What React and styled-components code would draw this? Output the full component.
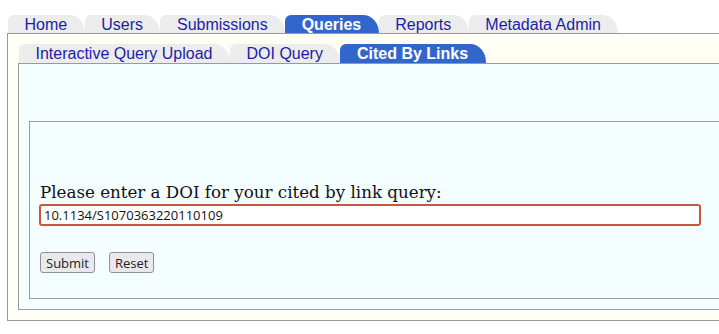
import React from "react";
import styled, { createGlobalStyle } from "styled-components";

const GlobalStyle = createGlobalStyle`
	body {
		margin: 0;
		background: #ffffff;
		font-family: "Liberation Sans", Arial, sans-serif;
	}
`;

const mainTabs = ["Home", "Users", "Submissions", "Queries", "Reports", "Metadata Admin"];
const subTabs = ["Interactive Query Upload", "DOI Query", "Cited By Links"];

const Page = styled.div`
	padding: 15px 0 0 7px;
`;

const TabBar = styled.ul`
	display: flex;
	margin: 0 0 0 1px;
	padding: 0;
	list-style: none;
`;

const Tab = styled.li`
	height: ${(p) => p.$h}px;
	line-height: ${(p) => p.$h + 1}px;
	padding: 0 17.5px 0 16.5px;
	font-size: 16px;
	font-weight: ${(p) => (p.$active ? "bold" : "normal")};
	color: ${(p) => (p.$active ? "#ffffff" : "#1c1ca8")};
	background: ${(p) => (p.$active ? "#3366cc" : "#ececec")};
	border-radius: 6px 16px 0 0 / 6px 18px 0 0;
	white-space: nowrap;
`;

const Frame = styled.div`
	border: 1px solid #9a9a9a;
	border-right: none;
	background: #fffef5;
	padding: 10px 0 10px 10px;
`;

const Panel = styled.div`
	border: 1px solid #9a9a9a;
	border-right: none;
	background: #f4fdff;
	padding: 57px 0 10px 10px;
`;

const QueryBox = styled.div`
	border: 1px solid #9a9a9a;
	border-right: none;
	padding: 59px 10px 25px 10px;
`;

const Label = styled.label`
	display: block;
	font-family: "DejaVu Serif", serif;
	font-size: 16.7px;
	line-height: 22px;
	color: #111;
`;

const DoiInput = styled.input`
	display: block;
	box-sizing: border-box;
	width: 662px;
	height: 22px;
	margin: 1px 0 0 -1px;
	padding: 0 3px;
	border: 2px solid #c9583b;
	border-radius: 3px;
	background: #ffffff;
	font-family: "Open Sans", "DejaVu Sans", sans-serif;
	font-size: 13px;
	color: #111;
	outline: none;
`;

const Buttons = styled.div`
	display: flex;
	gap: 14px;
	margin-top: 26px;
`;

const Button = styled.button`
	height: 21px;
	padding: 0 5px;
	border: 1px solid #8f8f9d;
	border-radius: 3px;
	background: #e9e9ed;
	font-family: "Open Sans", "DejaVu Sans", sans-serif;
	font-size: 13px;
	color: #222;
`;

const App = () => {
	return (
		<Page>
			<GlobalStyle />
			<TabBar>
				{mainTabs.map((t) => (
					<Tab key={t} $h={18} $active={t === "Queries"}>
						{t}
					</Tab>
				))}
			</TabBar>
			<Frame>
				<TabBar>
					{subTabs.map((t) => (
						<Tab key={t} $h={19} $active={t === "Cited By Links"}>
							{t}
						</Tab>
					))}
				</TabBar>
				<Panel>
					<QueryBox>
						<Label htmlFor="doi">Please enter a DOI for your cited by link query:</Label>
						<DoiInput id="doi" defaultValue="10.1134/S1070363220110109" />
						<Buttons>
							<Button>Submit</Button>
							<Button>Reset</Button>
						</Buttons>
					</QueryBox>
				</Panel>
			</Frame>
		</Page>
	);
};

export default App;
